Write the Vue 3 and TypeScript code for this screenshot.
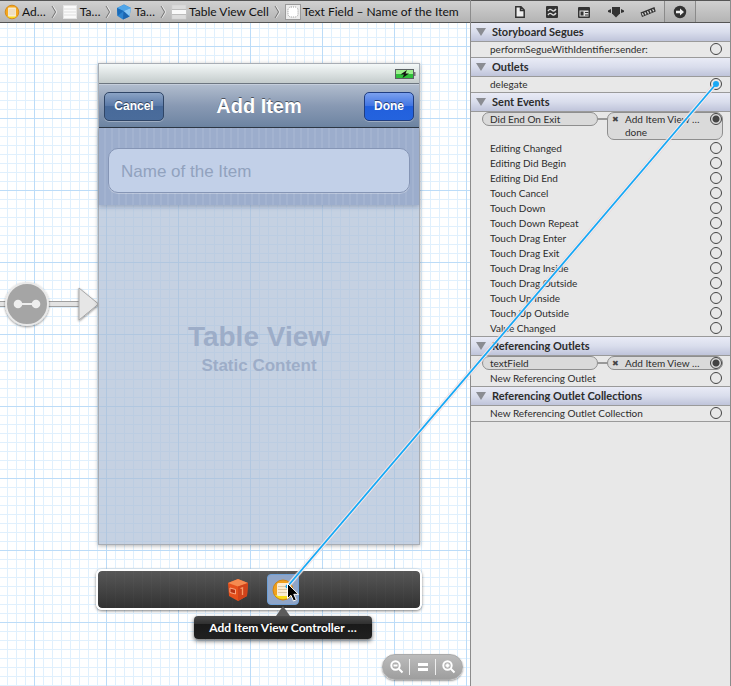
<script setup lang="ts">
import { onBeforeUnmount, onMounted, ref } from 'vue'

interface Row {
  name: string
  target?: string
  detail?: string
  active?: boolean
}

interface Section {
  title: string
  rows: Row[]
}

interface Crumb {
  label: string
  icon: 'controller' | 'table' | 'cube' | 'cell' | 'field'
}

const crumbs: Crumb[] = [
  { label: 'Ad…', icon: 'controller' },
  { label: 'Ta…', icon: 'table' },
  { label: 'Ta…', icon: 'cube' },
  { label: 'Table View Cell', icon: 'cell' },
  { label: 'Text Field – Name of the Item', icon: 'field' },
]

const tabs = ['File', 'Quick Help', 'Identity', 'Attributes', 'Size', 'Connections']

const sections: Section[] = [
  { title: 'Storyboard Segues', rows: [{ name: 'performSegueWithIdentifier:sender:' }] },
  { title: 'Outlets', rows: [{ name: 'delegate', active: true }] },
  {
    title: 'Sent Events',
    rows: [
      { name: 'Did End On Exit', target: 'Add Item View …', detail: 'done' },
      { name: 'Editing Changed' },
      { name: 'Editing Did Begin' },
      { name: 'Editing Did End' },
      { name: 'Touch Cancel' },
      { name: 'Touch Down' },
      { name: 'Touch Down Repeat' },
      { name: 'Touch Drag Enter' },
      { name: 'Touch Drag Exit' },
      { name: 'Touch Drag Inside' },
      { name: 'Touch Drag Outside' },
      { name: 'Touch Up Inside' },
      { name: 'Touch Up Outside' },
      { name: 'Value Changed' },
    ],
  },
  {
    title: 'Referencing Outlets',
    rows: [{ name: 'textField', target: 'Add Item View …' }, { name: 'New Referencing Outlet' }],
  },
  { title: 'Referencing Outlet Collections', rows: [{ name: 'New Referencing Outlet Collection' }] },
]

const itemName = ref('')
const page = ref<HTMLElement | null>(null)
const dropTarget = ref<HTMLElement | null>(null)
const line = ref({ x1: 716, y1: 84, x2: 288, y2: 587 })

function measure(): void {
  const root = page.value
  const end = dropTarget.value
  const start = root?.querySelector<HTMLElement>('.socket.active')
  if (!root || !end || !start) return
  const o = root.getBoundingClientRect()
  const a = start.getBoundingClientRect()
  const b = end.getBoundingClientRect()
  line.value = {
    x1: a.left + a.width / 2 - o.left,
    y1: a.top + a.height / 2 - o.top,
    x2: b.left + b.width / 2 - o.left + 5,
    y2: b.top + b.height / 2 - o.top - 3,
  }
}

onMounted(() => {
  measure()
  window.addEventListener('resize', measure)
})
onBeforeUnmount(() => window.removeEventListener('resize', measure))
</script>

<template>
  <main ref="page" class="page">
    <nav class="jumpbar" aria-label="Jump bar">
      <template v-for="(c, i) in crumbs" :key="i">
        <svg v-if="i" class="chevron" viewBox="0 0 6 14" aria-hidden="true">
          <path d="M1 1 L5 7 L1 13" fill="none" stroke="#fff" transform="translate(1 0)" opacity=".6" />
          <path d="M1 1 L4.5 7 L1 13" fill="none" stroke="#777" />
        </svg>
        <a class="crumb" href="#">
          <svg class="crumb-icon" viewBox="0 0 16 16" aria-hidden="true">
            <template v-if="c.icon === 'controller'">
              <circle cx="8" cy="8" r="6.8" fill="#f5a81c" stroke="#d48a1c" />
              <path d="M3 12 A6.5 6.5 0 0 0 13 12 Z" fill="#f8dd20" />
              <rect x="4" y="3.5" width="8" height="9" rx="1" fill="#f8ecd2" />
              <path d="M4.5 6h7M4.5 8h7M4.5 10h7" stroke="#dccaa6" stroke-width=".7" />
            </template>
            <template v-else-if="c.icon === 'table'">
              <rect x="1.5" y="1.5" width="13" height="13" fill="#fafafa" stroke="#e4e4e4" />
              <path d="M2 5h12M2 8h12M2 11h12" stroke="#dedede" />
            </template>
            <template v-else-if="c.icon === 'cube'">
              <path d="M8 .5 L15 4 L13.5 12.5 L7 15.5 L1.5 12 L1 4 Z" fill="#2b83cf" />
              <path d="M1 4 L8 .5 L15 4 L7.5 7 Z" fill="#4fa5e8" />
              <path d="M7.5 7 L15 4 L13.5 12.5 Z" fill="#8cc8f4" />
              <path d="M7.5 7 L13.5 12.5 L7 15.5 Z" fill="#1c66b0" />
              <path d="M1 4 L7.5 7 L1.5 12 Z" fill="#196bb9" />
            </template>
            <template v-else-if="c.icon === 'cell'">
              <rect x="1" y="1" width="14" height="14" fill="#dcdcdc" stroke="#cfcfcf" stroke-width=".6" />
              <rect x="1" y="6" width="14" height="4" fill="#fafafa" />
              <path d="M1 5.5h14M1 10.5h14" stroke="#bcbcbc" />
            </template>
            <template v-else>
              <rect x=".5" y=".5" width="15" height="15" fill="#ececec" stroke="#9a9a9a" />
              <rect x="3" y="3" width="10" height="10" rx="3" fill="#fff" stroke="#999" stroke-dasharray="1 1" />
            </template>
          </svg>
          <span>{{ c.label }}</span>
        </a>
      </template>
    </nav>

    <section class="canvas" aria-label="Storyboard canvas">
      <svg class="segue" viewBox="0 0 100 50" aria-hidden="true">
        <defs>
          <filter id="soft" x="-20%" y="-20%" width="140%" height="150%">
            <feDropShadow dx="0" dy="1" stdDeviation="1" flood-opacity=".45" />
          </filter>
        </defs>
        <path d="M0 22.5H79M0 27.5H79" stroke="#a0a0a0" />
        <path d="M0 25H79" stroke="#e3e3e3" stroke-width="4" />
        <g filter="url(#soft)">
          <circle cx="27" cy="25" r="21" fill="#a5a5a5" stroke="#e9e9e9" stroke-width="2" />
          <path d="M79 9 L98.5 25 L79 41 Z" fill="#e6e6e6" stroke="#a8a8a8" />
        </g>
        <path d="M18 25H36" stroke="#eee" stroke-width="2" />
        <circle cx="18" cy="25" r="4.3" fill="#eee" />
        <circle cx="36" cy="25" r="4.3" fill="#eee" />
      </svg>

      <article class="phone">
        <div class="status">
          <svg class="battery" viewBox="0 0 22 12" aria-label="Battery charging">
            <rect x="1.5" y="1.5" width="18" height="9" fill="#2fbf3a" stroke="#5c6163" />
            <rect x="2" y="2" width="17" height="4" fill="#9df08e" />
            <rect x="20" y="4" width="1.5" height="4" fill="#777" />
            <path d="M13 2 L6.5 6.6 H10 L8.5 10 L15 5.4 H11.5 Z" fill="#111" />
          </svg>
        </div>
        <header class="navbar">
          <button type="button" class="nav-btn cancel">Cancel</button>
          <h1>Add Item</h1>
          <button type="button" class="nav-btn done">Done</button>
        </header>
        <div class="cell">
          <input v-model="itemName" type="text" placeholder="Name of the Item" aria-label="Name of the Item" />
        </div>
        <div class="table-view">
          <p class="big">Table View</p>
          <p class="small">Static Content</p>
        </div>
      </article>

      <div class="dock">
        <button type="button" class="dock-item" aria-label="First Responder">
          <svg viewBox="0 0 24 24" aria-hidden="true">
            <path d="M2 5 L12 1 L22 5 L21 18 L12 23 L3 18 Z" fill="#e6501c" />
            <path d="M2 5 L12 1 L22 5 L12 8.500 Z" fill="#f58a50" />
            <path d="M12 8.500 L22 5 L21 18 L12 23 Z" fill="#d0431a" />
            <path d="M4 10 L9.500 11.500 V16 L4 14.500 Z" fill="#b83214" stroke="#ffb08a" stroke-width=".9" />
            <path d="M14.500 10.500 L16.500 9.800 V17" fill="none" stroke="#f79a68" stroke-width="1.300" />
          </svg>
        </button>
        <button ref="dropTarget" type="button" class="dock-item selected" aria-label="Add Item View Controller">
          <svg viewBox="0 0 24 24" aria-hidden="true">
            <circle cx="12" cy="12" r="10" fill="#f0a01e" stroke="#cf8613" />
            <path d="M4 17 A10 10 0 0 0 20 17 Z" fill="#f8dc18" />
            <rect x="6" y="5" width="12" height="13" rx="1.5" fill="#fbecd2" />
            <path d="M7 8.500h10M7 11.500h10M7 14.500h10" stroke="#dcc8a4" />
          </svg>
        </button>
        <div class="tooltip" role="tooltip">Add Item View Controller …</div>
      </div>

      <div class="zoombar">
        <button type="button" aria-label="Zoom out">
          <svg viewBox="0 0 14 14" aria-hidden="true">
            <circle cx="5.5" cy="5.5" r="4.2" /><path d="M8.8 8.8 L12.5 12.5 M3.5 5.5H7.5" />
          </svg>
        </button>
        <button type="button" aria-label="Actual size">
          <svg viewBox="0 0 14 14" aria-hidden="true"><path d="M2 4.5H12M2 9.5H12" stroke-width="3" /></svg>
        </button>
        <button type="button" aria-label="Zoom in">
          <svg viewBox="0 0 14 14" aria-hidden="true">
            <circle cx="5.5" cy="5.5" r="4.2" /><path d="M8.8 8.8 L12.5 12.5 M3.5 5.5H7.5M5.5 3.5V7.5" />
          </svg>
        </button>
      </div>
    </section>

    <aside class="inspector">
      <div class="tabs">
        <button v-for="(t, i) in tabs" :key="t" type="button" :aria-label="t" :class="{ current: i === 5 }">
          <svg viewBox="0 0 16 16" aria-hidden="true">
            <path v-if="i === 0" d="M3.8 2.8H9L12.200 6V13.200H3.800ZM8.500 3V6.500H12" fill="#eee" stroke="#333" stroke-width="1.5" />
            <template v-else-if="i === 1">
              <rect x="2" y="2" width="12" height="12" rx="1" fill="#333" />
              <path d="M4 7C5.500 4.800 6.500 5 8 6.300S10.500 7 12 5M4 11C5.500 8.800 6.500 9 8 10.300S10.500 11 12 9" fill="none" stroke="#ddd" stroke-width="1.4" />
            </template>
            <template v-else-if="i === 2">
              <rect x="2" y="3" width="12" height="11" rx="1" fill="#333" />
              <path d="M3.500 6.500H12.500V12.500H3.500Z" fill="#ddd" />
              <path d="M4.500 7.500H7.500V11.500H4.500ZM9 8H12.500V9H9ZM9 10.500H12.500V11.500H9Z" fill="#333" />
            </template>
            <template v-else-if="i === 3">
              <path d="M4 3H12V9.500L8 13.500L4 9.500Z" fill="#333" />
              <path d="M3 5V9L0 8V6.500ZM13 5V9L16 8V6.500Z" fill="#333" />
            </template>
            <template v-else-if="i === 4">
              <path d="M.5 8.500L14.500 3L15.700 7.500L2 13Z" fill="#333" />
              <path d="M2.200 9.200L3.500 11.500M4.800 8.200L6 10.500M7.400 7.200L8.600 9.500M10 6.200L11.200 8.500M12.600 5.200L13.800 7.300" stroke="#ddd" stroke-width="1.300" />
            </template>
            <template v-else>
              <circle cx="8" cy="8" r="6.200" fill="#333" />
              <path d="M4 6.800H8V4.500L12 8L8 11.500V9.200H4Z" fill="#eee" />
            </template>
          </svg>
        </button>
      </div>

      <section v-for="s in sections" :key="s.title" class="group">
        <h2><svg viewBox="0 0 10 8" aria-hidden="true"><path d="M0 0H10L5 8Z" fill="#8a8c92" /></svg>{{ s.title }}</h2>
        <ul>
          <li v-for="r in s.rows" :key="r.name" :class="{ linked: r.target, tall: r.detail }">
            <span class="name">{{ r.name }}</span>
            <template v-if="r.target">
              <span class="wire"></span>
              <span class="target">
                <button type="button" class="remove" aria-label="Disconnect">✖</button>
                <span class="dest">{{ r.target }}<br v-if="r.detail" />{{ r.detail }}</span>
              </span>
            </template>
            <span class="socket" :class="{ filled: r.target, active: r.active }"></span>
          </li>
        </ul>
      </section>
    </aside>

    <svg class="overlay" aria-hidden="true">
      <line v-bind="line" stroke="#e8c8cc" stroke-opacity=".5" stroke-width="5" />
      <line v-bind="line" stroke="#fff" stroke-opacity=".7" stroke-width="3.5" />
      <line v-bind="line" stroke="#18a8f4" stroke-width="1.800" />
      <circle :cx="line.x1" :cy="line.y1" r="3" fill="#18a8f4" />
      <circle :cx="line.x2" :cy="line.y2" r="2" fill="#18a8f4" />
      <g :transform="`translate(${line.x2} ${line.y2 - 3})`">
        <path d="M0 0V15L3.500 11.800L6 17.500L8.800 16.200L6.300 10.800H11Z" fill="#000" stroke="#fff" />
      </g>
    </svg>
  </main>
</template>

<style>
body {
  margin: 0;
}
</style>

<style scoped>
* {
  box-sizing: border-box;
}
h1, h2, p, ul {
  margin: 0;
  padding: 0;
}
button {
  padding: 0;
  border: 0;
  background: none;
  font-family: inherit;
}
.page {
  position: relative;
  display: grid;
  grid-template-columns: minmax(0, 1fr) 261px;
  grid-template-rows: 23px 1fr;
  min-height: 100vh;
  overflow: hidden;
  font-family: Lato, "Noto Sans", sans-serif;
  color: #2c2c2c;
}
.jumpbar {
  display: flex;
  align-items: center;
  gap: 5px;
  padding-left: 4px;
  overflow: hidden;
  border-top: 1px solid #555;
  border-bottom: 1px solid #555;
  background: linear-gradient(#d0d0d0, #b4b4b4);
}
.crumb {
  display: flex;
  align-items: center;
  gap: 2px;
  color: #111;
  font-size: 12px;
  line-height: 20px;
  white-space: nowrap;
  text-decoration: none;
}
.crumb-icon {
  flex: none;
  width: 16px;
  height: 16px;
}
.chevron {
  flex: none;
  width: 6px;
  height: 14px;
}
.canvas {
  position: relative;
  grid-row: 2;
  background-color: #fff;
  background-image:
    linear-gradient(90deg, #bcdcf8 1px, transparent 1px),
    linear-gradient(#bcdcf8 1px, transparent 1px),
    linear-gradient(90deg, #e0f0fd 1px, transparent 1px),
    linear-gradient(#e0f0fd 1px, transparent 1px);
  background-size: 72px 72px, 72px 72px, 9px 9px, 9px 9px;
  background-position: 34px 23px, 34px 23px, 7px 5px, 7px 5px;
}
.segue {
  position: absolute;
  left: 0;
  top: 256px;
  width: 100px;
  height: 50px;
}
.phone {
  position: absolute;
  left: 98px;
  top: 40px;
  display: flex;
  flex-direction: column;
  width: 322px;
  height: 482px;
  border: 1px solid #a8adb4;
  box-shadow: 0 1px 4px rgba(0, 0, 0, 0.3);
  font-family: "Liberation Sans", Arial, sans-serif;
}
.status {
  display: flex;
  align-items: center;
  justify-content: flex-end;
  height: 20px;
  padding-right: 3px;
  border-bottom: 1px solid #6d7680;
  background: linear-gradient(#f4f8f8, #c4cccc);
}
.battery {
  width: 22px;
  height: 12px;
}
.navbar {
  display: grid;
  grid-template-columns: 1fr auto 1fr;
  align-items: center;
  height: 44px;
  padding: 0 5px;
  border-top: 1px solid #c5cedb;
  border-bottom: 1px solid #2d3642;
  background: linear-gradient(#b0bccd, #8899b3 50%, #6d84a2);
}
.navbar h1 {
  color: #fff;
  font-size: 20px;
  line-height: 24px;
  text-shadow: 0 -1px 0 rgba(0, 0, 0, 0.5);
}
.nav-btn {
  height: 29px;
  border: 1px solid #2f4566;
  border-radius: 5px;
  color: #fff;
  font-size: 12px;
  font-weight: bold;
  text-shadow: 0 -1px 0 rgba(0, 0, 0, 0.5);
  box-shadow: 0 1px 0 rgba(255, 255, 255, 0.3);
}
.cancel {
  width: 60px;
  background: linear-gradient(#8ba3c5, #5878a7 50%, #486a9a 50%, #4a6c9b);
}
.done {
  justify-self: end;
  width: 50px;
  border-color: #203d80;
  background: linear-gradient(#7ba0ee, #3f73e2 50%, #2260dd 50%, #2463de);
}
.cell {
  position: relative;
  padding: 20px 9px 12px;
  background: repeating-linear-gradient(90deg, #9cadcc 0 5px, #a3b3d0 5px 7px);
  box-shadow: 0 2px 4px rgba(60, 80, 120, 0.3);
}
.cell input {
  display: block;
  width: 100%;
  height: 45px;
  padding: 2px 12px 0;
  border: 1px solid #8595b5;
  border-radius: 10px;
  background: #c2d0e8;
  box-shadow: 0 1px 0 rgba(255, 255, 255, 0.3);
  color: #333;
  font-family: inherit;
  font-size: 17px;
  outline: 0;
}
.cell input::placeholder {
  color: #91a2be;
  opacity: 1;
}
.table-view {
  display: flex;
  flex: 1;
  flex-direction: column;
  align-items: center;
  padding-top: 115px;
  background: rgba(172, 189, 214, 0.7);
  color: #9dadc8;
  font-weight: bold;
}
.big {
  font-size: 28px;
  line-height: 34px;
}
.small {
  font-size: 17px;
  line-height: 24px;
}
.dock {
  position: absolute;
  left: 96px;
  top: 546px;
  display: flex;
  align-items: center;
  justify-content: center;
  gap: 13px;
  width: 326px;
  height: 41px;
  padding-left: 2px;
  border: 2px solid #fff;
  border-radius: 6px;
  background:
    linear-gradient(rgba(100, 100, 100, 0.6), rgba(38, 38, 38, 0.6)),
    repeating-linear-gradient(90deg, #444 0 8px, #4c4c4c 8px 9px);
  background-clip: padding-box;
  box-shadow: 0 1px 3px rgba(0, 0, 0, 0.5);
}
.dock-item {
  display: grid;
  place-items: center;
  width: 32px;
  height: 31px;
  border-radius: 4px;
}
.dock-item svg {
  width: 24px;
  height: 24px;
}
.dock-item.selected {
  border: 1px solid #6d9fd6;
  background: #8fa5c8;
}
.tooltip {
  position: absolute;
  left: 96px;
  top: 45px;
  width: 178px;
  border-radius: 4px;
  background: linear-gradient(#4a4a4a, #303030 35%, #1a1a1a 35%, #202020);
  box-shadow: 0 2px 4px rgba(0, 0, 0, 0.6);
  color: #fff;
  font-size: 12px;
  font-weight: bold;
  line-height: 23px;
  text-align: center;
  white-space: nowrap;
}
.tooltip::before {
  position: absolute;
  left: 82px;
  bottom: 100%;
  border: 7px solid transparent;
  border-top: 0;
  border-bottom: 10px solid #5c5c5c;
  content: "";
}
.zoombar {
  position: absolute;
  right: 7px;
  bottom: 6px;
  display: flex;
  align-items: center;
  width: 81px;
  height: 26px;
  padding: 0 1px;
  border: 1px solid #aaa;
  border-radius: 13px;
  background: linear-gradient(#bcbcbc, #9e9e9e);
  box-shadow: 0 1px 2px rgba(0, 0, 0, 0.4);
}
.zoombar button {
  display: grid;
  flex: 1;
  place-items: center;
  height: 16px;
}
.zoombar button + button {
  border-left: 1px solid #eee;
}
.zoombar svg {
  width: 14px;
  height: 14px;
  fill: none;
  stroke: #fff;
  stroke-width: 2;
}
.inspector {
  grid-column: 2;
  grid-row: 1 / 3;
  border-right: 1px solid #8c8c8c;
  border-left: 1px solid #8c8c8c;
  background: #e8e8e8;
}
.tabs {
  display: flex;
  justify-content: center;
  height: 23px;
  padding-right: 2px;
  border-top: 1px solid #555;
  border-bottom: 1px solid #555;
  background: linear-gradient(#d0d0d0, #b4b4b4);
}
.tabs button {
  display: grid;
  place-items: center;
  width: 32px;
}
.tabs .current {
  border-right: 1px solid #8a8a8a;
  border-left: 1px solid #8a8a8a;
  background: linear-gradient(#cacaca, #aeaeae);
}
.tabs svg {
  width: 16px;
  height: 16px;
}
.group {
  border-bottom: 1px solid #9a9a9a;
}
.group h2 {
  display: flex;
  align-items: center;
  gap: 6px;
  height: 19px;
  padding-left: 5px;
  border-bottom: 1px solid #9a9a9a;
  background: linear-gradient(#e9ebf6, #d9ddec 50%, #bfc4da);
  font-size: 11px;
  line-height: 18px;
}
.group h2 svg {
  width: 10px;
  height: 8px;
}
.group ul {
  list-style: none;
}
.group li {
  position: relative;
  display: flex;
  align-items: flex-start;
  height: 15px;
  padding: 0 7px 0 11px;
  font-size: 10px;
  line-height: 14px;
}
.group li.tall {
  height: 29px;
}
.name {
  flex: 1;
  padding-left: 8px;
}
.linked .name {
  flex: none;
  width: 116px;
  height: 14px;
  padding-left: 7px;
  border: 1px solid #8e8e8e;
  border-radius: 7px;
  background: #dadada;
  line-height: 12px;
}
.wire {
  flex: 1;
  height: 2px;
  margin-top: 6px;
  background: #999;
}
.target {
  display: flex;
  gap: 6px;
  width: 116px;
  padding-left: 4px;
  border: 1px solid #8e8e8e;
  border-radius: 7px;
  background: #dadada;
  line-height: 12px;
}
.tall .target {
  height: 28px;
}
.tall .dest {
  line-height: 13px;
}
.remove {
  width: 7px;
  height: 12px;
  color: #444;
  font-size: 8px;
  line-height: 12px;
}
.socket {
  width: 12px;
  height: 12px;
  margin: 1px 1px 0 0;
  border: 1px solid #444;
  border-radius: 50%;
}
.linked .socket {
  position: absolute;
  top: 0;
  right: 7px;
}
.socket.filled {
  background: radial-gradient(circle, #444 0 3px, transparent 4px);
}
.overlay {
  position: absolute;
  inset: 0;
  width: 100%;
  height: 100%;
  pointer-events: none;
}
</style>
